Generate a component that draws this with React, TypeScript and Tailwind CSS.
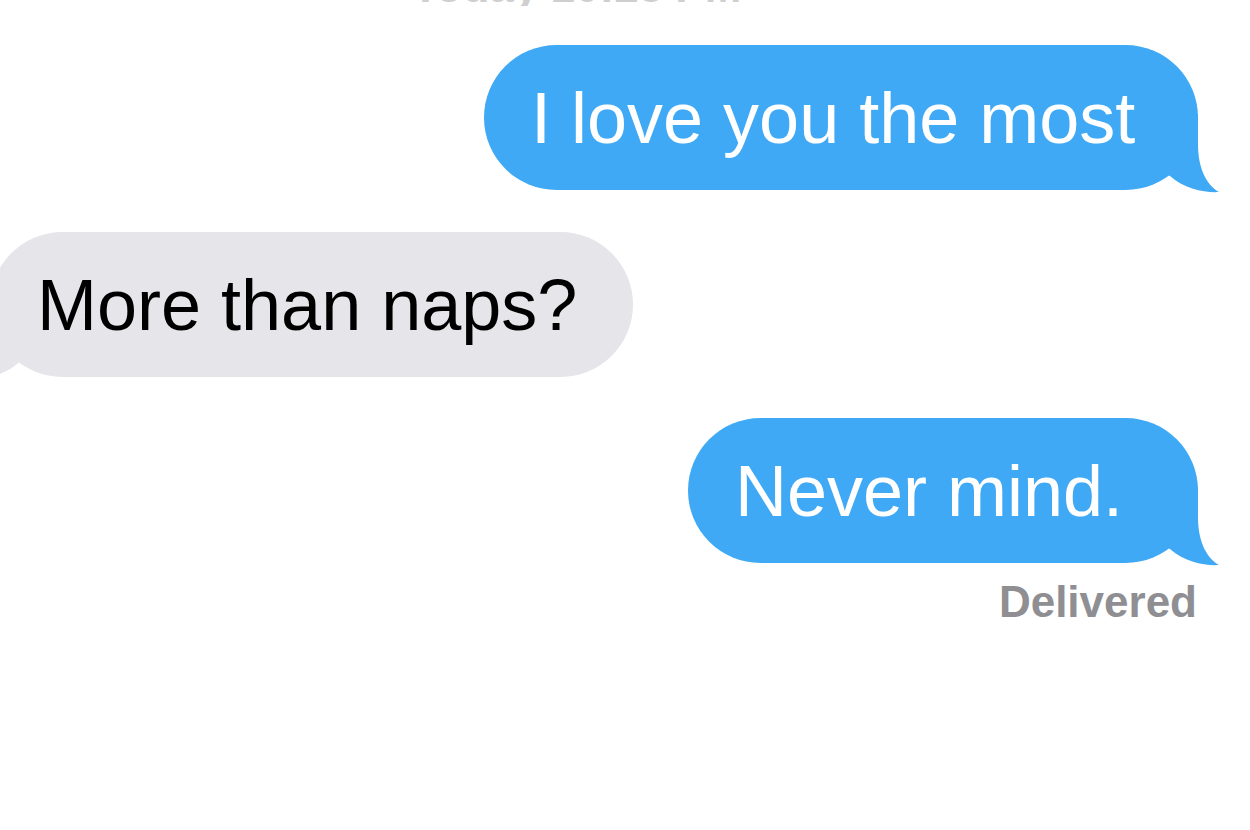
import React from "react";

function RightTail({ color }: { color: string }) {
  return (
    <svg
      className="absolute right-[-24px] bottom-[-4px]"
      width="60"
      height="80"
      viewBox="0 0 60 80"
    >
      <path
        d="M0 0 L36 0 L36 30 C36 52 43 70 57 78 C44 79 22 75 8 62 L0 58 Z"
        fill={color}
      />
    </svg>
  );
}

function LeftTail({ color }: { color: string }) {
  return (
    <svg
      className="absolute left-[-24px] bottom-[-4px]"
      width="60"
      height="80"
      viewBox="0 0 60 80"
    >
      <path
        d="M60 0 L24 0 L24 30 C24 52 17 70 3 78 C16 79 38 75 52 62 L60 58 Z"
        fill={color}
      />
    </svg>
  );
}

export default function App() {
  return (
    <div
      className="w-[1250px] h-[830px] overflow-hidden bg-white flex flex-col"
      style={{ fontFamily: '"Liberation Sans", Arial, Helvetica, sans-serif' }}
    >
      <div className="h-[6px] overflow-hidden flex flex-col justify-end items-start pl-[412px]">
        <div className="text-[44px] leading-[38px] text-[#cfcfcf] font-bold whitespace-nowrap">
          Today 10:28 PM
        </div>
      </div>

      <div className="mt-[39px] flex justify-end pr-[52px]">
        <div className="relative w-[714px] h-[145px] rounded-full bg-[#3fa9f5] flex items-center pl-[47px]">
          <RightTail color="#3fa9f5" />
          <span className="relative z-10 text-white text-[72px] leading-[72px] whitespace-nowrap">
            I love you the most
          </span>
        </div>
      </div>

      <div className="mt-[42px] flex justify-start ml-[-10px]">
        <div className="relative w-[643px] h-[145px] rounded-full bg-[#e5e5ea] flex items-center pl-[47px]">
          <LeftTail color="#e5e5ea" />
          <span className="relative z-10 text-black text-[72px] leading-[72px] whitespace-nowrap">
            More than naps?
          </span>
        </div>
      </div>

      <div className="mt-[41px] flex justify-end pr-[52px]">
        <div className="relative w-[510px] h-[145px] rounded-full bg-[#3fa9f5] flex items-center pl-[47px]">
          <RightTail color="#3fa9f5" />
          <span className="relative z-10 text-white text-[72px] leading-[72px] whitespace-nowrap">
            Never mind.
          </span>
        </div>
      </div>

      <div className="mt-[13px] flex justify-end pr-[53px]">
        <span className="text-[44px] leading-[52px] font-bold text-[#8e8e93] whitespace-nowrap">
          Delivered
        </span>
      </div>
    </div>
  );
}
